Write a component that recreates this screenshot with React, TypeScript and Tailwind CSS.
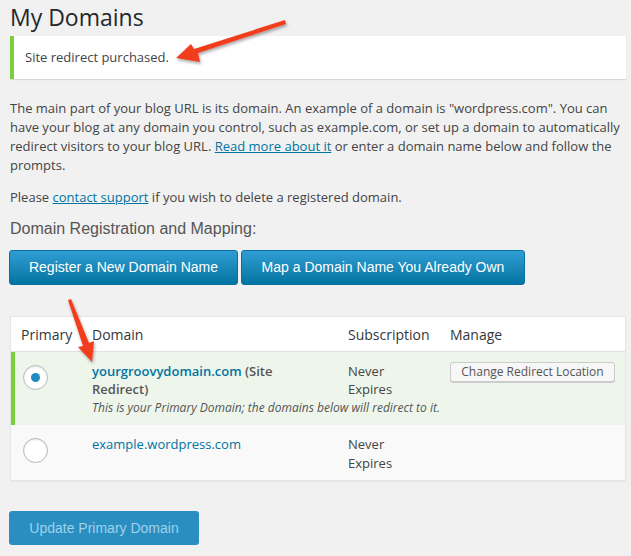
import React from "react";

const sans = { fontFamily: '"Open Sans", "Noto Sans", sans-serif' };
const helv = { fontFamily: '"Liberation Sans", Arial, sans-serif' };

function Radio({ checked }: { checked?: boolean }) {
  return (
    <span className="flex h-[25px] w-[25px] items-center justify-center rounded-full border border-[#b4b9be] bg-white shadow-[inset_0_1px_2px_rgba(0,0,0,0.1)]">
      {checked && <span className="h-[9px] w-[9px] rounded-full bg-[#1e8cbe]" />}
    </span>
  );
}

function Arrows() {
  return (
    <svg className="pointer-events-none absolute left-0 top-0" width="631" height="556" viewBox="0 0 631 556">
      <defs>
        <filter id="sh" x="-20%" y="-20%" width="140%" height="140%">
          <feDropShadow dx="1" dy="2" stdDeviation="1.5" floodColor="#000" floodOpacity="0.35" />
        </filter>
      </defs>
      {/* notice pointer */}
      <polygon
        filter="url(#sh)"
        fill="#f23d1f"
        points="285,20 286,24 198,53 200,62 176,58 191,44 194,49"
      />
      {/* domain pointer */}
      <polygon
        filter="url(#sh)"
        fill="#f23d1f"
        points="68,300 71,299 89,343 94,341 92,362 78,347 83,346"
      />
    </svg>
  );
}

export default function App() {
  return (
    <div className="relative h-[556px] w-[631px] overflow-hidden bg-[#f1f1f1] text-[#444]" style={sans}>
      <div className="pl-[10px] pr-[5px]">
        <h1 className="pt-[3px] text-[23px] font-normal leading-[29px] text-[#23282d]">My Domains</h1>

        <div className="mt-[4px] flex h-[43px] items-center border-l-4 border-[#7ad03a] bg-white pl-[11px] shadow-[0_1px_1px_rgba(0,0,0,0.1)]">
          <p className="text-[13px] text-[#444]">Site redirect purchased.</p>
        </div>

        <p className="mt-[20px] w-[612px] text-[13px] leading-[19px] text-[#444]">
          The main part of your blog URL is its domain. An example of a domain is "wordpress.com". You can have your blog at any domain you control, such as example.com, or set up a domain to automatically redirect visitors to your blog URL.{" "}
          <a className="text-[#0074a2] underline">Read more about it</a> or enter a domain name below and follow the prompts.
        </p>

        <p className="mt-[13px] text-[13px] leading-[19px] text-[#444]">
          Please <a className="text-[#0074a2] underline">contact support</a> if you wish to delete a registered domain.
        </p>

        <h3 className="mt-[12px] text-[16px] font-normal leading-[20px] text-[#555]" style={helv}>
          Domain Registration and Mapping:
        </h3>

        <div className="ml-[-1px] mt-[11px] flex gap-[3px]" style={helv}>
          <button className="h-[35px] w-[229px] rounded-[3px] border border-[#0a6ea0] bg-gradient-to-b from-[#2e9ed3] to-[#0074a2] text-[14px] text-white">
            Register a New Domain Name
          </button>
          <button className="h-[35px] w-[284px] rounded-[3px] border border-[#0a6ea0] bg-gradient-to-b from-[#2e9ed3] to-[#0074a2] text-[14px] text-white">
            Map a Domain Name You Already Own
          </button>
        </div>

        <div className="mt-[31px] w-[616px] border border-[#e5e5e5] bg-white shadow-[0_1px_1px_rgba(0,0,0,0.04)]">
          <div className="grid h-[35px] grid-cols-[71px_256px_102px_1fr] items-center border-b border-[#e1e1e1] text-[14px] text-[#32373c]">
            <div className="pl-[10px]">Primary</div>
            <div className="pl-[10px]">Domain</div>
            <div className="pl-[10px]">Subscription</div>
            <div className="pl-[10px]">Manage</div>
          </div>

          <div className="grid h-[73px] grid-cols-[71px_256px_102px_1fr] content-start border-l-4 border-[#7ad03a] bg-[#eef6ec]">
            <div className="row-span-2 pl-[8px] pt-[13px]">
              <Radio checked />
            </div>
            <div className="pl-[6px] pt-[10px] text-[13px] font-semibold leading-[18px]">
              <div className="w-[200px]">
                <span className="text-[#0074a2]">yourgroovydomain.com</span>{" "}
                <span className="text-[#555]">(Site Redirect)</span>
              </div>
            </div>
            <div className="pl-[6px] pt-[10px] text-[13px] leading-[18px] text-[#444]">
              Never
              <br />
              Expires
            </div>
            <div className="pl-[6px] pt-[6px]">
              <button className="h-[20px] w-[165px] rounded-[3px] border border-[#ccc] bg-[#f7f7f7] text-[12px] leading-[18px] text-[#555] shadow-[0_1px_0_#ccc]">
                Change Redirect Location
              </button>
            </div>
            <div className="col-span-3 col-start-2 mt-[1px] pl-[6px] text-[12px] italic leading-[17px] text-[#555]">
              This is your Primary Domain; the domains below will redirect to it.
            </div>
          </div>

          <div className="grid h-[55px] grid-cols-[71px_256px_102px_1fr] content-start bg-[#f9f9f9]">
            <div className="pl-[12px] pt-[13px]">
              <Radio />
            </div>
            <div className="pl-[10px] pt-[10px] text-[13px] leading-[18px] text-[#0074a2]">example.wordpress.com</div>
            <div className="pl-[10px] pt-[10px] text-[13px] leading-[19px] text-[#444]">
              Never
              <br />
              Expires
            </div>
            <div />
          </div>
        </div>

        <button
          className="ml-[-1px] mt-[30px] h-[34px] w-[190px] rounded-[3px] bg-[#2a8ec1] text-[14px] text-[#9fd2ec]"
          style={helv}
        >
          Update Primary Domain
        </button>
      </div>
      <Arrows />
    </div>
  );
}
